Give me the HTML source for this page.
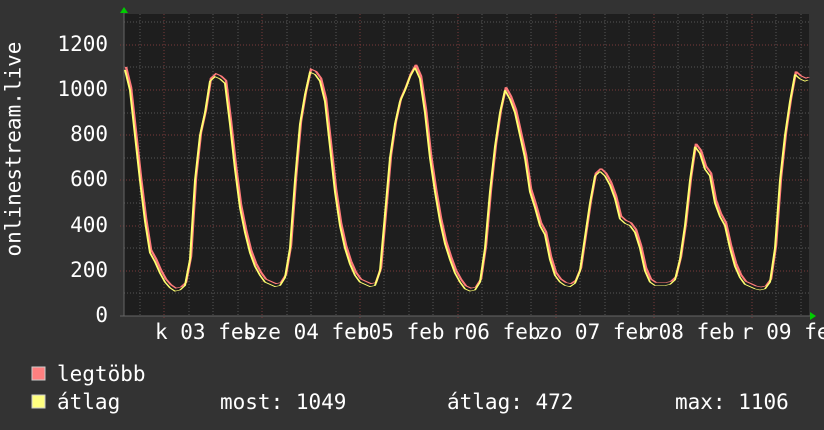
<!DOCTYPE html>
<html><head><meta charset="utf-8"><style>
html,body{margin:0;padding:0;background:#333;}
body{width:824px;height:430px;overflow:hidden;position:relative;font-family:"DejaVu Sans Mono","Liberation Mono",monospace;color:#fff;}
.t{position:absolute;font-size:21px;white-space:pre;line-height:1;}
.yl{position:absolute;right:716px;font-size:21px;line-height:1;}
</style></head><body>
<svg width="824" height="430" style="position:absolute;left:0;top:0">
<rect x="124" y="14" width="685" height="302" fill="#1e1e1e"/>
<g stroke="#555" stroke-width="1" stroke-dasharray="1,2">
<line x1="140" y1="14" x2="140" y2="316"/><line x1="189" y1="14" x2="189" y2="316"/><line x1="213" y1="14" x2="213" y2="316"/><line x1="238" y1="14" x2="238" y2="316"/>
<line x1="287" y1="14" x2="287" y2="316"/><line x1="311" y1="14" x2="311" y2="316"/><line x1="336" y1="14" x2="336" y2="316"/>
<line x1="384" y1="14" x2="384" y2="316"/><line x1="409" y1="14" x2="409" y2="316"/><line x1="433" y1="14" x2="433" y2="316"/>
<line x1="482" y1="14" x2="482" y2="316"/><line x1="507" y1="14" x2="507" y2="316"/><line x1="531" y1="14" x2="531" y2="316"/>
<line x1="580" y1="14" x2="580" y2="316"/><line x1="605" y1="14" x2="605" y2="316"/><line x1="629" y1="14" x2="629" y2="316"/>
<line x1="678" y1="14" x2="678" y2="316"/><line x1="703" y1="14" x2="703" y2="316"/><line x1="727" y1="14" x2="727" y2="316"/>
<line x1="776" y1="14" x2="776" y2="316"/><line x1="801" y1="14" x2="801" y2="316"/>
<line x1="124" y1="22" x2="809" y2="22"/><line x1="124" y1="67" x2="809" y2="67"/><line x1="124" y1="113" x2="809" y2="113"/><line x1="124" y1="158" x2="809" y2="158"/><line x1="124" y1="203" x2="809" y2="203"/><line x1="124" y1="248" x2="809" y2="248"/><line x1="124" y1="293" x2="809" y2="293"/>
</g>
<g stroke="#7a3a3a" stroke-width="1" stroke-dasharray="1,2">
<line x1="164" y1="14" x2="164" y2="320"/><line x1="262" y1="14" x2="262" y2="320"/><line x1="360" y1="14" x2="360" y2="320"/><line x1="458" y1="14" x2="458" y2="320"/><line x1="556" y1="14" x2="556" y2="320"/><line x1="654" y1="14" x2="654" y2="320"/><line x1="752" y1="14" x2="752" y2="320"/>
<line x1="120" y1="45" x2="809" y2="45"/><line x1="120" y1="90" x2="809" y2="90"/><line x1="120" y1="135" x2="809" y2="135"/><line x1="120" y1="180" x2="809" y2="180"/><line x1="120" y1="226" x2="809" y2="226"/><line x1="120" y1="271" x2="809" y2="271"/>
</g>
<line x1="124" y1="12" x2="124" y2="316" stroke="#666"/>
<line x1="120" y1="316" x2="811" y2="316" stroke="#666"/>
<polygon points="120,13 124,7 128,13" fill="#0c0"/>
<polygon points="810,312 816,316 810,320" fill="#0c0"/>
<defs><polyline id="d" points="125,1090 130,1000 135,800 140,600 145,420 150,280 155,240 160,190 165,150 170,125 175,110 180,115 185,135 190,250 195,600 200,800 205,900 210,1040 215,1060 220,1050 225,1030 230,850 235,650 240,480 245,370 250,280 255,220 260,180 265,150 270,140 275,130 280,135 285,170 290,300 295,600 300,850 305,980 310,1080 315,1070 320,1040 325,950 330,750 335,550 340,400 345,300 350,230 355,180 360,150 365,140 370,130 375,135 380,200 385,450 390,700 395,850 400,950 405,1000 410,1060 415,1100 420,1050 425,900 430,700 435,550 440,420 445,320 450,250 455,190 460,150 465,120 470,110 475,115 480,150 485,300 490,550 495,750 500,900 505,1000 510,960 515,900 520,800 525,700 530,550 535,480 540,400 545,360 550,250 555,180 560,150 565,135 570,130 575,145 580,200 585,350 590,500 595,620 600,640 605,620 610,580 615,520 620,430 625,410 630,400 635,370 640,300 645,200 650,150 655,135 660,135 665,135 670,140 675,160 680,250 685,400 690,600 695,750 700,720 705,650 710,620 715,500 720,440 725,400 730,300 735,220 740,170 745,140 750,130 755,120 760,115 765,120 770,150 775,300 780,600 785,800 790,950 795,1070 800,1050 805,1040 808,1045" fill="none"/></defs>
<g transform="translate(1,313) scale(1,-0.2258)"><use href="#d" stroke="#ff7b7b" stroke-width="2.5" vector-effect="non-scaling-stroke" fill="none"/></g>
<g transform="translate(0,316) scale(1,-0.2258)"><use href="#d" stroke="#ffff70" stroke-width="2" vector-effect="non-scaling-stroke" fill="none"/></g>
<rect x="32" y="367" width="13" height="13" fill="#ff8080" stroke="#ccc" stroke-width="1"/>
<rect x="32" y="395" width="13" height="13" fill="#ffff80" stroke="#ccc" stroke-width="1"/>
</svg>
<div class="yl" style="top:34px">1200</div>
<div class="yl" style="top:79px">1000</div>
<div class="yl" style="top:124px">800</div>
<div class="yl" style="top:169px">600</div>
<div class="yl" style="top:215px">400</div>
<div class="yl" style="top:260px">200</div>
<div class="yl" style="top:305px">0</div>
<div class="t" style="left:-76px;top:156px;transform:rotate(-90deg);width:180px;text-align:center">onlinestream.live</div>
<div class="t" style="left:155px;top:322px">k 03 feb</div>
<div class="t" style="left:243px;top:322px">sze 04 feb</div>
<div class="t" style="left:356px;top:322px">r05 feb</div>
<div class="t" style="left:452px;top:322px">r06 feb</div>
<div class="t" style="left:537px;top:322px">zo 07 feb</div>
<div class="t" style="left:646px;top:322px">r08 feb</div>
<div class="t" style="left:741px;top:322px">r 09 fe</div>
<div class="t" style="left:57px;top:364px">legtöbb</div>
<div class="t" style="left:57px;top:392px">átlag</div>
<div class="t" style="left:220px;top:392px">most: 1049</div>
<div class="t" style="left:447px;top:392px">átlag: 472</div>
<div class="t" style="left:675px;top:392px">max: 1106</div>
</body></html>
